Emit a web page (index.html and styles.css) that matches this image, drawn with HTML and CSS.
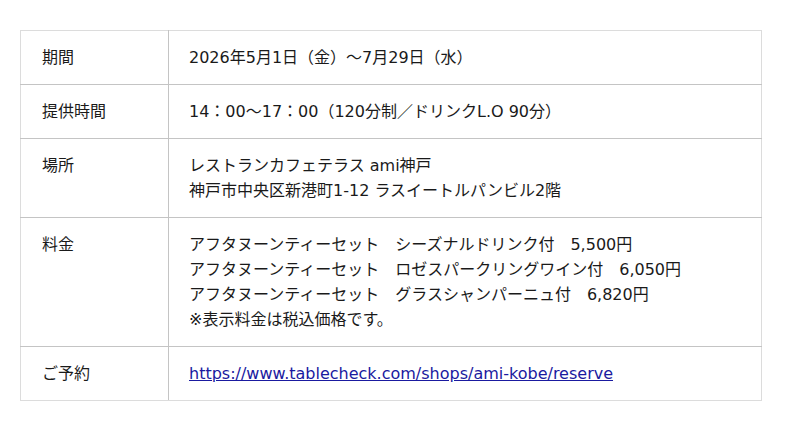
FILE: index.html
```html
<!DOCTYPE html>
<html lang="ja">
<head>
<meta charset="utf-8">
<link rel="stylesheet" href="styles.css">
</head>
<body>
<table class="info">
  <tr>
    <th>期間</th>
    <td>2026年5月1日（金）〜7月29日（水）</td>
  </tr>
  <tr>
    <th>提供時間</th>
    <td>14：00〜17：00（120分制／ドリンクL.O 90分）</td>
  </tr>
  <tr>
    <th>場所</th>
    <td>レストランカフェテラス ami神戸<br>神戸市中央区新港町1-12 ラスイートルパンビル2階</td>
  </tr>
  <tr>
    <th>料金</th>
    <td>アフタヌーンティーセット　シーズナルドリンク付　5,500円<br>アフタヌーンティーセット　ロゼスパークリングワイン付　6,050円<br>アフタヌーンティーセット　グラスシャンパーニュ付　6,820円<br>※表示料金は税込価格です。</td>
  </tr>
  <tr>
    <th>ご予約</th>
    <td><a href="#">https://www.tablecheck.com/shops/ami-kobe/reserve</a></td>
  </tr>
</table>
</body>
</html>
```
FILE: styles.css
```css
html, body {
  margin: 0;
  padding: 0;
  background: #fff;
}
body {
  padding: 30px 0 0 20px;
  font-family: "DejaVu Sans", "Noto Sans CJK JP", sans-serif;
  font-size: 16px;
  line-height: 25px;
  color: #1a1a1a;
}
.info {
  border-collapse: collapse;
  width: 742px;
  border: 1px solid #dcdcdc;
}
.info th,
.info td {
  text-align: left;
  vertical-align: top;
  font-weight: normal;
  padding: 14px 20px;
  border-bottom: 1px solid #c4c4c4;
}
.info th {
  width: 106px;
  padding-left: 21px;
  border-right: 1px solid #c4c4c4;
}
.info tr:last-child th,
.info tr:last-child td {
  border-bottom: 1px solid #dcdcdc;
}
.info a {
  color: #1a1aa0;
  text-decoration: underline;
}
```
